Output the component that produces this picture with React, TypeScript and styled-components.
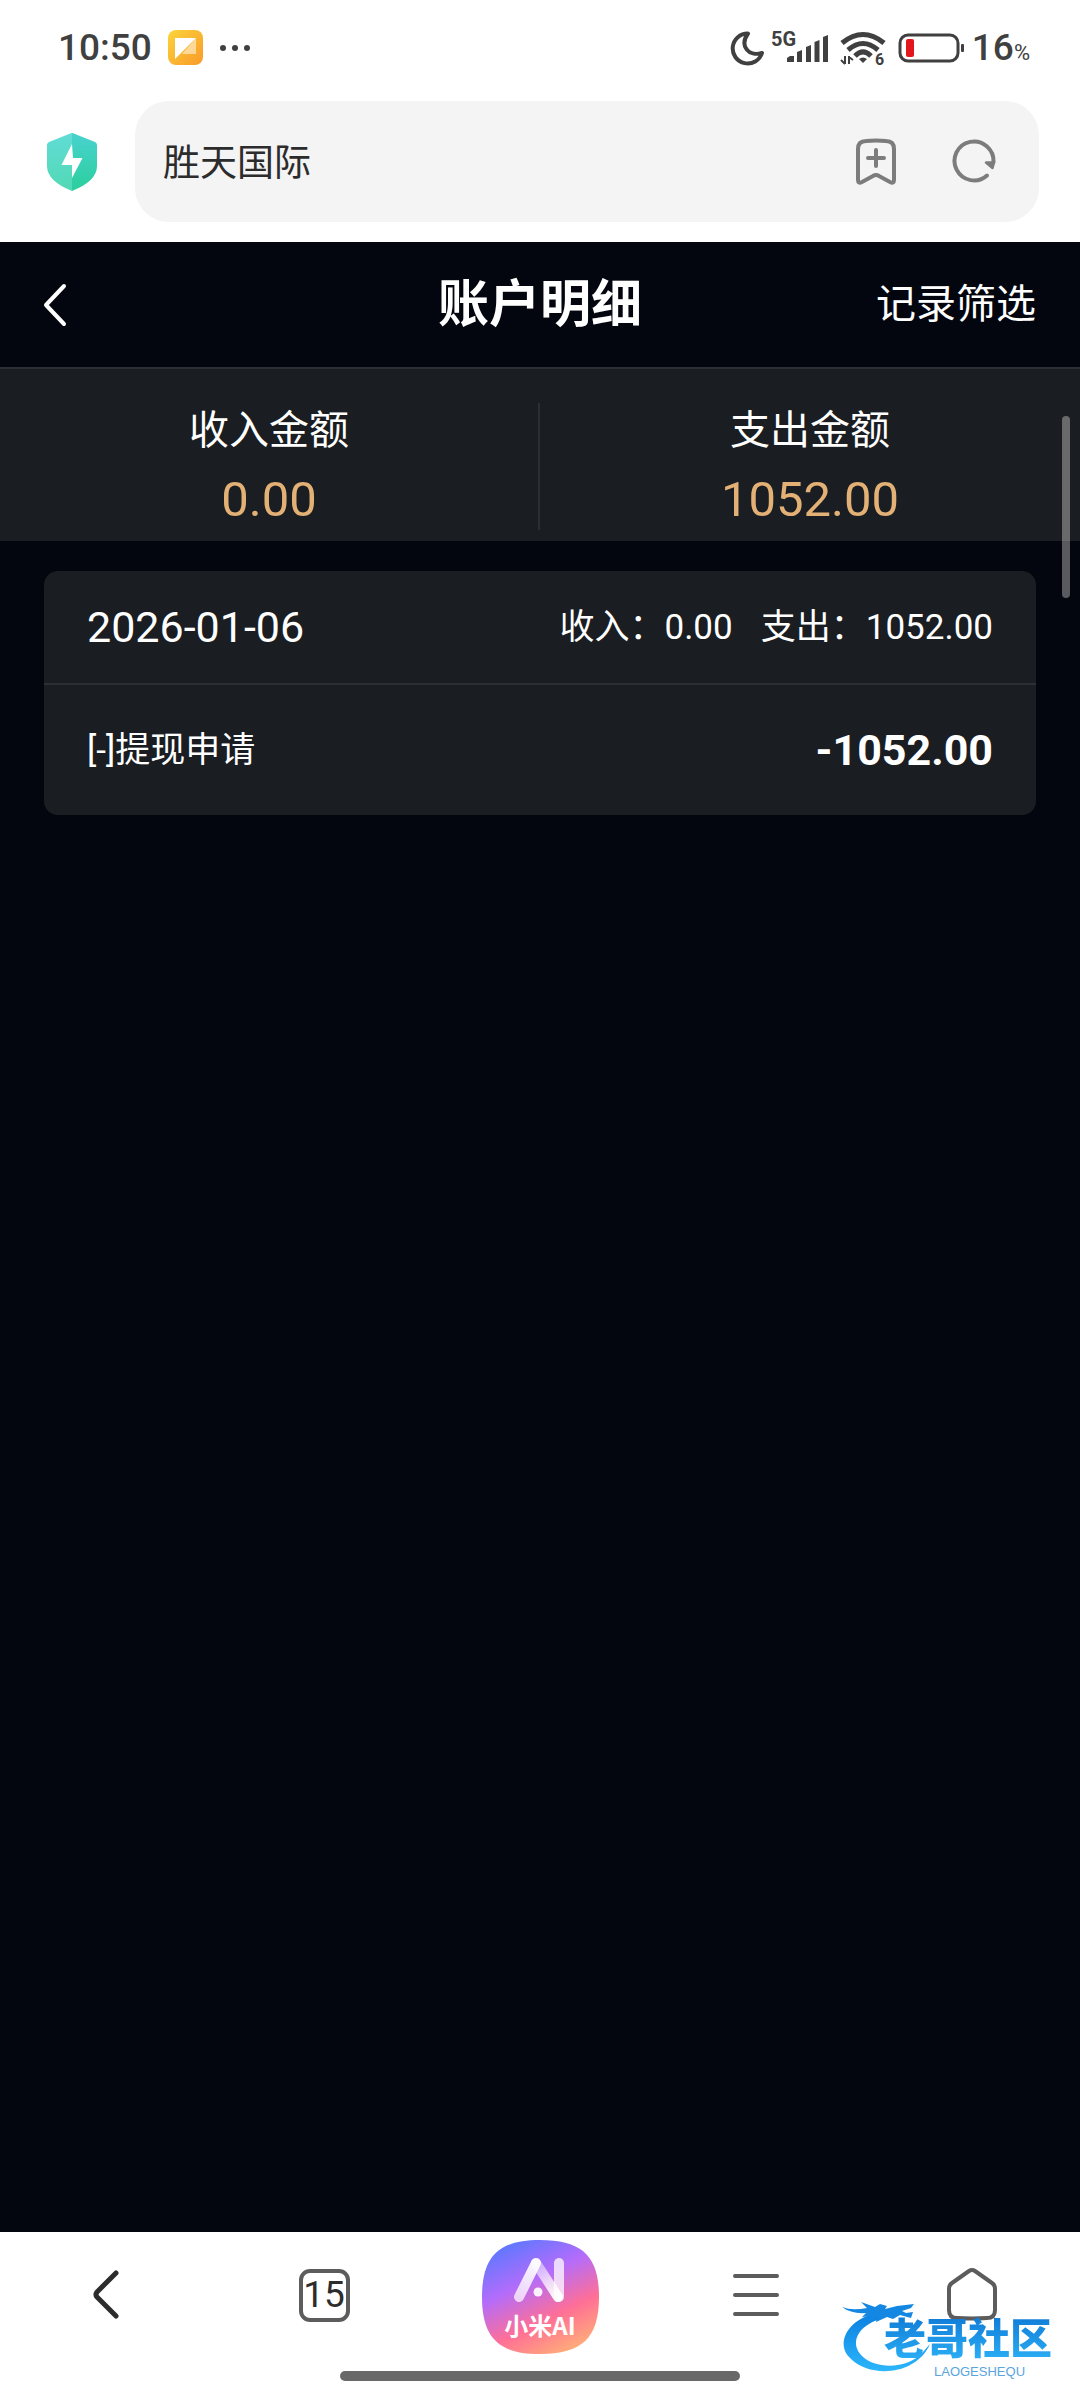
import React from 'react';
import styled, { createGlobalStyle } from 'styled-components';

const GlobalStyle = createGlobalStyle`
  * { box-sizing: border-box; }
  body {
    margin: 0;
    background: #ffffff;
    font-family: Roboto, "Noto Sans CJK SC", sans-serif;
  }
  h1, h2, p, dl, dt, dd { margin: 0; font-weight: 400; }
  svg { display: block; flex: none; overflow: visible; }
`;

const Screen = styled.div`
  display: flex;
  flex-direction: column;
  min-height: 100vh;
`;

const PlainButton = styled.button`
  display: grid;
  place-items: center;
  padding: 0;
  border: 0;
  background: none;
  color: inherit;
  font: inherit;
  cursor: pointer;
`;

/* System status bar */

const StatusBar = styled.div`
  display: flex;
  align-items: center;
  justify-content: space-between;
  height: 95px;
  padding: 0 50px 0 58px;
  color: #404040;
`;

const StatusGroup = styled.div<{ $gap: number }>`
  display: flex;
  align-items: center;
  gap: ${(p) => p.$gap}px;
`;

const Clock = styled.time`
  font-size: 37px;
  font-weight: 500;
  line-height: 44px;
`;

const BatteryLevel = styled.span`
  display: flex;
  align-items: baseline;
  font-size: 37px;
  font-weight: 500;
  line-height: 44px;

  small {
    font-size: 22px;
    font-weight: 400;
    line-height: 24px;
  }
`;

/* Browser toolbar */

const Toolbar = styled.div`
  display: flex;
  align-items: center;
  gap: 36px;
  padding: 6px 41px 20px 45px;
`;

const AddressBox = styled.div`
  display: flex;
  flex: 1;
  align-items: center;
  gap: 38px;
  height: 121px;
  padding: 0 35px 0 28px;
  border-radius: 34px;
  background: #f4f4f4;
  color: #7c7c7c;
`;

const AddressInput = styled.input`
  flex: 1;
  min-width: 0;
  padding: 4px 0 0;
  border: 0;
  outline: 0;
  background: none;
  color: #2c2c2c;
  font: inherit;
  font-size: 37px;
  line-height: 52px;
`;

/* Page */

const Page = styled.main`
  position: relative;
  flex: 1;
  background: #03060e;
  color: #ffffff;
`;

const Header = styled.header`
  display: grid;
  grid-template-columns: 1fr auto 1fr;
  align-items: center;
  height: 127px;
  padding: 0 44px;
  border-bottom: 2px solid #2c2e34;
`;

const BackButton = styled(PlainButton)`
  justify-self: start;
`;

const Title = styled.h1`
  font-size: 51px;
  font-weight: 700;
  line-height: 72px;
`;

const FilterButton = styled(PlainButton)`
  justify-self: end;
  font-size: 40px;
  line-height: 56px;
`;

const Summary = styled.dl`
  display: grid;
  grid-template-columns: 1fr 1fr;
  padding: 34px 0 11px;
  background: #1a1d21;
  text-align: center;
`;

const SummaryItem = styled.div`
  display: grid;
  gap: 11px;

  &:not(:last-child) {
    border-right: 2px solid #2c2e34;
  }
`;

const SummaryLabel = styled.dt`
  font-size: 40px;
  line-height: 56px;
`;

const SummaryValue = styled.dd`
  color: #e3b075;
  font-size: 49px;
  line-height: 60px;
`;

const Records = styled.section`
  padding: 30px 44px;
`;

const RecordCard = styled.article`
  border-radius: 14px;
  background: #1a1d21;
`;

const RecordHead = styled.div`
  display: flex;
  align-items: center;
  justify-content: space-between;
  height: 114px;
  padding: 0 43px;
  border-bottom: 2px solid #2c2e34;
`;

const RecordDate = styled.h2`
  font-size: 43px;
  line-height: 52px;
`;

const RecordTotals = styled.div`
  display: flex;
  gap: 28px;
  padding-top: 2px;
  font-size: 35px;
  line-height: 52px;
`;

const RecordRow = styled.div`
  display: flex;
  align-items: center;
  justify-content: space-between;
  height: 130px;
  padding: 0 43px;
`;

const RecordName = styled.p`
  padding-top: 2px;
  font-size: 35px;
  line-height: 52px;
`;

const RecordAmount = styled.p`
  font-size: 43px;
  font-weight: 700;
  line-height: 52px;
`;

const ScrollThumb = styled.div`
  position: absolute;
  top: 174px;
  right: 10px;
  width: 8px;
  height: 182px;
  border-radius: 4px;
  background: rgba(255, 255, 255, 0.34);
`;

/* Browser bottom bar */

const BottomBar = styled.footer`
  position: relative;
  padding-bottom: 19px;
  background: #ffffff;
`;

const BottomNav = styled.nav`
  display: grid;
  grid-template-columns: repeat(5, 1fr);
  align-items: center;
  justify-items: center;
  height: 126px;
  color: #5c5c5c;
`;

const TabCount = styled.span`
  display: grid;
  place-items: center;
  width: 51px;
  height: 53px;
  border: 4px solid #5c5c5c;
  border-radius: 11px;
  color: #2c2c2c;
  font-size: 37px;
  line-height: 44px;
`;

const AssistantButton = styled(PlainButton)`
  padding-top: 4px;

  & > * {
    grid-area: 1 / 1;
  }
`;

const AssistantLabel = styled.span`
  align-self: end;
  padding-bottom: 13px;
  color: #ffffff;
  font-family: "Noto Sans CJK SC", sans-serif;
  font-size: 24px;
  font-weight: 700;
  line-height: 32px;
`;

const HomeIndicator = styled.div`
  width: 37%;
  height: 10px;
  margin: 13px auto 0;
  border-radius: 5px;
  background: #686868;
`;

const Watermark = styled.div`
  position: absolute;
  right: 15px;
  bottom: 21px;
  width: 223px;
  padding: 15px 0 0 42px;
`;

const WatermarkArt = styled.svg`
  position: absolute;
  top: 0;
  left: 0;
`;

const WatermarkName = styled.div`
  position: relative;
  background: linear-gradient(#0f7ad6, #2fb4f8);
  background-clip: text;
  color: transparent;
  font-size: 42px;
  font-weight: 900;
  line-height: 50px;
`;

const WatermarkLatin = styled.div`
  position: relative;
  padding-left: 50px;
  color: #5aa5dd;
  font-family: "Liberation Sans", sans-serif;
  font-size: 13px;
  line-height: 14px;
`;

const NoteIcon = () => (
  <svg width="35" height="35" viewBox="0 0 35 35" aria-hidden="true">
    <defs>
      <linearGradient id="note" x1="0" y1="0" x2="1" y2="1">
        <stop offset="0" stopColor="#fbd43a" />
        <stop offset="1" stopColor="#f99a2a" />
      </linearGradient>
    </defs>
    <rect width="35" height="35" rx="8" fill="url(#note)" />
    <path d="M28 8V24H14Z" fill="#fff" opacity="0.5" />
    <path d="M7 8H28L7 29Z" fill="#fff" />
  </svg>
);

const DotsIcon = () => (
  <svg width="31" height="8" viewBox="0 0 31 8" fill="#404040" aria-hidden="true">
    <circle cx="4" cy="4" r="3" />
    <circle cx="16" cy="4" r="3" />
    <circle cx="28" cy="4" r="3" />
  </svg>
);

const MoonIcon = () => (
  <svg width="36" height="36" viewBox="0 0 36 36" aria-hidden="true">
    <path
      d="M20 3.5A15 15 0 1 0 34 23C21 27 11 16 20 3.5Z"
      fill="none"
      stroke="#404040"
      strokeWidth="4"
      strokeLinejoin="round"
    />
  </svg>
);

const SignalIcon = () => (
  <svg width="60" height="36" viewBox="0 0 60 36" fill="#404040" aria-hidden="true">
    <text x="1" y="16" fontFamily="Roboto, sans-serif" fontSize="20" fontWeight="700">5G</text>
    <path d="M17 28L20 26H24V32H17ZM27 22L32 20V32H27ZM36 17L41 15V32H36ZM44.500 12L49.500 10V32H44.500ZM53 7L58 5V32H53Z" />
  </svg>
);

const WifiIcon = () => (
  <svg width="54" height="36" viewBox="0 0 54 36" fill="none" stroke="#404040" aria-hidden="true">
    <path d="M6 13Q27 -4 48 13" strokeWidth="5" />
    <path d="M12 20Q27 7 42 20" strokeWidth="5" />
    <path d="M19 26Q27 18 35 26" strokeWidth="5" />
    <path d="M23 29Q27 26 31 29L27 33Z" fill="#404040" stroke="none" />
    <path d="M9 26V34M5 30L9 34M13 34V26M17 30L13 27" strokeWidth="2" />
    <text x="39" y="35" fill="#404040" stroke="none" fontFamily="Roboto, sans-serif" fontSize="16" fontWeight="700">6</text>
  </svg>
);

const BatteryIcon = () => (
  <svg width="70" height="36" viewBox="0 0 70 36" aria-hidden="true">
    <rect x="4" y="5" width="58" height="26" rx="8" fill="none" stroke="#404040" strokeWidth="3" />
    <rect x="10" y="9" width="8" height="18" rx="2" fill="#e3171b" />
    <rect x="65" y="14" width="3" height="8" rx="1" fill="#404040" />
  </svg>
);

const ShieldIcon = () => (
  <svg width="54" height="60" viewBox="0 0 54 60" aria-hidden="true">
    <defs>
      <linearGradient id="shieldLeft" x1="0" y1="0" x2="0" y2="1">
        <stop offset="0" stopColor="#61dcd6" />
        <stop offset="1" stopColor="#52d9b5" />
      </linearGradient>
      <linearGradient id="shieldRight" x1="0" y1="0" x2="0" y2="1">
        <stop offset="0" stopColor="#48d2cf" />
        <stop offset="1" stopColor="#2bcf9d" />
      </linearGradient>
    </defs>
    <path d="M27 1Q26 1 24 2L4 10Q2 11 2 13V34Q2 49 27 59Z" fill="url(#shieldLeft)" />
    <path d="M27 1Q28 1 30 2L50 10Q52 11 52 13V34Q52 49 27 59Z" fill="url(#shieldRight)" />
    <path d="M27 12L16.500 33H27V46L37.500 26H28Z" fill="#fff" />
  </svg>
);

const BookmarkIcon = () => (
  <svg width="60" height="60" viewBox="0 0 60 60" fill="none" stroke="currentColor" strokeWidth="4" strokeLinecap="round" strokeLinejoin="round" aria-hidden="true">
    <path d="M12 17Q12 9 20 9Q30 8 40 9Q48 9 48 17V48Q48 52 44 50L33 44Q30 42 27 44L16 50Q12 52 12 48Z" />
    <path d="M30 18V34M22 26H38" />
  </svg>
);

const RefreshIcon = () => (
  <svg width="60" height="60" viewBox="0 0 60 60" fill="none" stroke="currentColor" strokeWidth="4" strokeLinecap="round" aria-hidden="true">
    <path d="M49.500 30A19.500 19.500 0 1 0 43 43.500" />
    <path d="M42 30.500H50L48.500 36Z" fill="currentColor" strokeWidth="2.500" strokeLinejoin="round" />
  </svg>
);

const HeaderBackIcon = () => (
  <svg width="22" height="42" viewBox="0 0 22 42" fill="none" stroke="#fff" strokeWidth="4" strokeLinecap="round" strokeLinejoin="round" aria-hidden="true">
    <path d="M20 2L2 21L20 40" />
  </svg>
);

const NavBackIcon = () => (
  <svg width="30" height="48" viewBox="0 0 30 48" fill="none" stroke="#2c2c2c" strokeWidth="5" strokeLinecap="round" strokeLinejoin="round" aria-hidden="true">
    <path d="M23 2L4 21Q2 24 4 26L23 45" />
  </svg>
);

const MenuIcon = () => (
  <svg width="46" height="44" viewBox="0 0 46 44" stroke="currentColor" strokeWidth="4" strokeLinecap="round" aria-hidden="true">
    <path d="M2 3H44M2 22H44M2 41H44" />
  </svg>
);

const HomeIcon = () => (
  <svg width="52" height="54" viewBox="0 0 52 54" fill="none" stroke="currentColor" strokeWidth="4" strokeLinejoin="round" aria-hidden="true">
    <path d="M23 3Q26 1 29 3L46 15Q49 17 49 21V42Q49 50 41 50Q26 51 11 50Q3 50 3 42V21Q3 17 6 15Z" />
  </svg>
);

const AssistantIcon = () => (
  <svg width="117" height="114" viewBox="0 0 117 114" aria-hidden="true">
    <defs>
      <linearGradient id="assistant" x1="0.250" y1="0" x2="0.750" y2="1">
        <stop offset="0" stopColor="#5c78ff" />
        <stop offset="0.350" stopColor="#b36cfb" />
        <stop offset="0.680" stopColor="#ff6f96" />
        <stop offset="1" stopColor="#ffb077" />
      </linearGradient>
      <linearGradient id="assistantLeg" gradientUnits="userSpaceOnUse" x1="53" y1="22" x2="38" y2="60">
        <stop offset="0" stopColor="#fff" stopOpacity="0.950" />
        <stop offset="1" stopColor="#fff" stopOpacity="0.700" />
      </linearGradient>
      <linearGradient id="assistantMid" gradientUnits="userSpaceOnUse" x1="54" y1="22" x2="77" y2="58">
        <stop offset="0" stopColor="#fff" stopOpacity="0.400" />
        <stop offset="1" stopColor="#fff" />
      </linearGradient>
    </defs>
    <path d="M58 0C100 0 117 16 117 57C117 98 100 114 58 114C17 114 0 98 0 57C0 16 17 0 58 0Z" fill="url(#assistant)" />
    <g fill="none" strokeWidth="10" strokeLinecap="round">
      <path d="M77 23V57" stroke="#fff" strokeOpacity="0.750" />
      <path d="M54 23L76 57" stroke="url(#assistantMid)" />
      <path d="M54 23L37 57" stroke="url(#assistantLeg)" />
    </g>
    <circle cx="56" cy="52" r="4.500" fill="#fff" fillOpacity="0.900" />
  </svg>
);

const DragonArt = () => (
  <WatermarkArt width="100" height="84" viewBox="0 0 100 84" aria-hidden="true">
    <defs>
      <linearGradient id="dragon" x1="0" y1="0" x2="0" y2="1">
        <stop offset="0" stopColor="#0b7fe0" />
        <stop offset="1" stopColor="#2cb6fb" />
      </linearGradient>
    </defs>
    <path
      d="M36 13C6 18 -8 44 9 59C28 78 74 76 88 44L81 52C67 69 34 70 20 56C7 43 16 26 38 19Z"
      fill="url(#dragon)"
    />
    <path
      d="M0 7Q10 11 25 8L19 2L33 7L38 4L45 6L43 9L55 6L72 4L69 8L60 11L64 13L71 12L69 18L58 15L51 19L45 17L34 22L35 18L26 21L30 16L20 17L24 13Q9 14 0 7Z"
      fill="#1487e2"
    />
  </WatermarkArt>
);

const summary = [
  { label: '收入金额', value: '0.00' },
  { label: '支出金额', value: '1052.00' },
];

const records = [
  {
    date: '2026-01-06',
    income: '0.00',
    expense: '1052.00',
    entries: [{ name: '[-]提现申请', amount: '-1052.00' }],
  },
];

export default function App() {
  return (
    <Screen>
      <GlobalStyle />
      <StatusBar>
        <StatusGroup $gap={16}>
          <Clock>10:50</Clock>
          <NoteIcon />
          <DotsIcon />
        </StatusGroup>
        <StatusGroup $gap={6}>
          <MoonIcon />
          <SignalIcon />
          <WifiIcon />
          <BatteryIcon />
          <BatteryLevel>
            16<small>%</small>
          </BatteryLevel>
        </StatusGroup>
      </StatusBar>

      <Toolbar>
        <PlainButton type="button" aria-label="安全">
          <ShieldIcon />
        </PlainButton>
        <AddressBox>
          <AddressInput aria-label="地址栏" defaultValue="胜天国际" />
          <PlainButton type="button" aria-label="添加书签">
            <BookmarkIcon />
          </PlainButton>
          <PlainButton type="button" aria-label="刷新">
            <RefreshIcon />
          </PlainButton>
        </AddressBox>
      </Toolbar>

      <Page>
        <Header>
          <BackButton type="button" aria-label="返回">
            <HeaderBackIcon />
          </BackButton>
          <Title>账户明细</Title>
          <FilterButton type="button">记录筛选</FilterButton>
        </Header>
        <Summary>
          {summary.map((item) => (
            <SummaryItem key={item.label}>
              <SummaryLabel>{item.label}</SummaryLabel>
              <SummaryValue>{item.value}</SummaryValue>
            </SummaryItem>
          ))}
        </Summary>
        <Records>
          {records.map((record) => (
            <RecordCard key={record.date}>
              <RecordHead>
                <RecordDate>{record.date}</RecordDate>
                <RecordTotals>
                  <span>收入：{record.income}</span>
                  <span>支出：{record.expense}</span>
                </RecordTotals>
              </RecordHead>
              {record.entries.map((entry) => (
                <RecordRow key={entry.name}>
                  <RecordName>{entry.name}</RecordName>
                  <RecordAmount>{entry.amount}</RecordAmount>
                </RecordRow>
              ))}
            </RecordCard>
          ))}
        </Records>
        <ScrollThumb />
      </Page>

      <BottomBar>
        <BottomNav>
          <PlainButton type="button" aria-label="后退">
            <NavBackIcon />
          </PlainButton>
          <PlainButton type="button" aria-label="标签页">
            <TabCount>15</TabCount>
          </PlainButton>
          <AssistantButton type="button">
            <AssistantIcon />
            <AssistantLabel>小米AI</AssistantLabel>
          </AssistantButton>
          <PlainButton type="button" aria-label="菜单">
            <MenuIcon />
          </PlainButton>
          <PlainButton type="button" aria-label="主页">
            <HomeIcon />
          </PlainButton>
        </BottomNav>
        <HomeIndicator />
        <Watermark>
          <DragonArt />
          <WatermarkName>老哥社区</WatermarkName>
          <WatermarkLatin>LAOGESHEQU</WatermarkLatin>
        </Watermark>
      </BottomBar>
    </Screen>
  );
}
